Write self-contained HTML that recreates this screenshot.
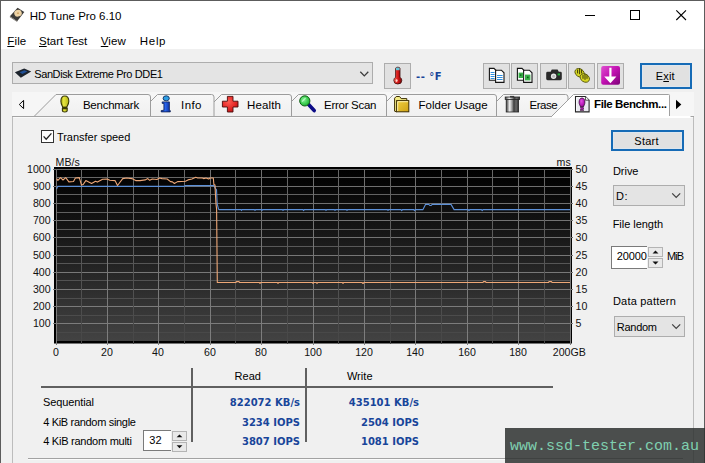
<!DOCTYPE html>
<html>
<head>
<meta charset="utf-8">
<title>HD Tune Pro 6.10</title>
<style>
html,body{margin:0;padding:0;}
body{width:705px;height:463px;overflow:hidden;background:#f0f0f0;position:relative;font-family:"Liberation Sans",sans-serif;font-size:12px;color:#000;}
.abs{position:absolute;}
.t{position:absolute;white-space:nowrap;line-height:14px;height:14px;font-size:11.5px;}
.d{font-size:11px;}
#win{position:absolute;left:0;top:0;width:703px;height:463px;border:1px solid #5c5c5c;border-bottom:none;background:#f0f0f0;}
#title{position:absolute;left:1px;top:1px;width:703px;height:48px;background:#fff;}
.btn{position:absolute;background:#e1e1e1;border:1px solid #adadad;box-sizing:border-box;}
.combo{position:absolute;background:#e4e4e4;border:1px solid #adadad;box-sizing:border-box;}
.val{position:absolute;white-space:nowrap;font-family:"DejaVu Sans","Liberation Sans",sans-serif;font-weight:bold;font-size:10px;color:#18459a;line-height:12px;text-align:right;}
.ax{font-family:"Liberation Sans",sans-serif;font-size:10.6px;fill:#111;}
.spin{position:absolute;background:#e9e9e9;border:1px solid #b4b4b4;box-sizing:border-box;}
</style>
</head>
<body>
<div id="win"></div>
<div id="title"></div>

<!-- title bar -->
<svg class="abs" style="left:9px;top:7px" width="17" height="16" viewBox="0 0 17 16">
  <polygon points="8.6,0.8 15.3,4.9 8.2,14.2 0.9,9.2" fill="#3b3a38"/>
  <polygon points="0.9,9.2 8.2,14.2 8.2,15 0.9,10.2" fill="#77736c"/>
  <ellipse cx="9" cy="6.2" rx="3.8" ry="3.3" fill="#ecd2a4" transform="rotate(-20 9 6.2)"/>
  <ellipse cx="9" cy="6.2" rx="1.1" ry="0.9" fill="#d2a868"/>
</svg>
<div class="t" style="left:29.8px;top:9.1px;letter-spacing:-0.03px">HD Tune Pro 6.10</div>
<svg class="abs" style="left:580px;top:5px" width="120" height="20" viewBox="0 0 120 20">
  <path d="M5 10.5H15" stroke="#000" stroke-width="1" fill="none"/>
  <rect x="50.5" y="5.5" width="9" height="9" stroke="#000" stroke-width="1" fill="none"/>
  <path d="M96.3 5.3L106 15M106 5.3L96.3 15" stroke="#000" stroke-width="1.1" fill="none"/>
</svg>

<!-- menu -->
<div class="t" style="left:7.3px;top:33.8px;letter-spacing:0.14px"><u>F</u>ile</div>
<div class="t" style="left:39.0px;top:33.8px;letter-spacing:-0.01px"><u>S</u>tart Test</div>
<div class="t" style="left:100.8px;top:33.8px;letter-spacing:0.06px"><u>V</u>iew</div>
<div class="t" style="left:139.8px;top:33.8px;letter-spacing:0.69px">Help</div>

<!-- toolbar row -->
<div class="combo" style="left:12px;top:62px;width:361px;height:22px"></div>
<svg class="abs" style="left:13px;top:66px" width="20" height="14" viewBox="13 66 20 14">
  <polygon points="14.9,72.3 24.2,68.6 31.2,71.4 20.8,77.8" fill="#1c232c"/>
  <polygon points="19.6,72.3 24.3,70.3 27.4,71.6 22.4,74" fill="#1f4f96"/>
</svg>
<div class="t d" style="left:34.2px;top:67.2px;letter-spacing:-0.38px">SanDisk Extreme Pro DDE1</div>
<svg class="abs" style="left:358px;top:68px" width="12" height="10" viewBox="0 0 12 10"><path d="M2.3 3.8L6.3 7.9L10.3 3.8" stroke="#3c3c3c" stroke-width="1.3" fill="none"/></svg>

<div class="btn" style="left:384px;top:63px;width:27px;height:26px"></div>
<svg class="abs" style="left:384px;top:63px" width="27" height="26" viewBox="384 63 27 26">
  <defs><linearGradient id="th" x1="0" y1="0" x2="1" y2="0"><stop offset="0" stop-color="#ff6a5a"/><stop offset="0.5" stop-color="#d81818"/><stop offset="1" stop-color="#7a0808"/></linearGradient></defs>
  <path d="M395.6 68.4Q395.6 67.2 397.8 67.2Q400 67.2 400 68.4V77.2Q401.8 78.4 401.8 80.4Q401.8 84 397.8 84Q393.8 84 393.8 80.4Q393.8 78.4 395.6 77.2Z" fill="url(#th)" stroke="#3a0a0a" stroke-width="0.8"/>
  <rect x="396" y="67.6" width="3.6" height="2.6" fill="#66c6d8"/>
  <ellipse cx="396.6" cy="80.6" rx="1" ry="1.3" fill="#ffd8d0"/>
</svg>
<div class="t" style="left:416.1px;top:70px;font-family:'DejaVu Sans','Liberation Sans',sans-serif;font-size:10px;font-weight:bold;color:#18459a;letter-spacing:0.45px">-- °F</div>

<div class="btn" style="left:483px;top:63px;width:27px;height:26px"></div>
<div class="btn" style="left:511px;top:63px;width:27px;height:26px"></div>
<div class="btn" style="left:540px;top:63px;width:27px;height:26px"></div>
<div class="btn" style="left:568px;top:63px;width:27px;height:26px"></div>
<div class="btn" style="left:597px;top:63px;width:27px;height:26px"></div>
<svg class="abs" style="left:483px;top:63px" width="142" height="26" viewBox="483 63 142 26">
  <defs>
    <linearGradient id="mg" x1="0" y1="0" x2="1" y2="1"><stop offset="0" stop-color="#e050d0"/><stop offset="0.5" stop-color="#c010b0"/><stop offset="1" stop-color="#7c0078"/></linearGradient>
  </defs>
  <!-- copy text -->
  <g stroke="#141414" stroke-width="1.1" fill="#fff">
    <path d="M489.4 68.4H494L496.4 70.8V80.2H489.4Z"/>
    <path d="M495.6 70.2H501.4L504 72.8V82.4H495.6Z"/>
  </g>
  <g stroke="#2f8fe0" stroke-width="1" fill="none">
    <path d="M490.6 72.5H494.6M490.6 74.5H494.6M490.6 76.5H494.6M490.6 78.5H494.6"/>
    <path d="M497 75.5H502.6M497 77.5H502.6M497 79.5H502.6"/>
  </g>
  <rect x="495.6" y="70.2" width="8.4" height="12.2" fill="none" stroke="none"/>
  <!-- copy image -->
  <g stroke="#141414" stroke-width="1.1" fill="#fff">
    <path d="M517.4 68.4H522L524.4 70.8V80.2H517.4Z"/>
    <path d="M523.6 70.2H529.4L532 72.8V82.4H523.6Z"/>
  </g>
  <rect x="518.6" y="72.6" width="4.6" height="5.4" fill="#38b048"/>
  <rect x="525" y="74.6" width="5.4" height="5.8" fill="#38b048"/>
  <rect x="527" y="76.6" width="1.6" height="1.6" fill="#0a5a18"/>
  <rect x="520" y="74.4" width="1.4" height="1.4" fill="#0a5a18"/>
  <!-- camera -->
  <path d="M546.2 73.2Q546.2 71.8 547.6 71.8H550.6L551.8 69.4H557.6L558.8 71.8H560.4Q561.8 71.8 561.8 73.2V78.8Q561.8 80.2 560.4 80.2H547.6Q546.2 80.2 546.2 78.8Z" fill="#2a2a2a"/>
  <circle cx="553.6" cy="76.2" r="2.7" fill="#e8e8e8"/>
  <circle cx="553.6" cy="76.2" r="1.5" fill="#bdbdbd"/>
  <rect x="557.6" y="73.4" width="2.4" height="2" fill="#28b040"/>
  <!-- coins -->
  <g fill="#d6d622" stroke="#5a5a10" stroke-width="0.9">
    <ellipse cx="579.6" cy="72.8" rx="5" ry="3.9" transform="rotate(35 579.6 72.8)"/>
    <ellipse cx="584.8" cy="78" rx="5" ry="3.9" transform="rotate(35 584.8 78)"/>
  </g>
  <g stroke="#3c3c06" stroke-width="1" fill="none">
    <path d="M577.6 69.6V73.4M579.6 68.2V74.2M581.6 69.6V73.4"/>
    <path d="M583 75V78.8M585 73.8V79.8M587 75.2V78.8"/>
  </g>
  <!-- save -->
  <rect x="601.2" y="66" width="18.8" height="18.8" rx="2" fill="url(#mg)"/>
  <path d="M609.3 67.8H611.5V76.6H616.4L610.4 83.2L604.2 76.6H609.3Z" fill="#fff"/>
</svg>
<div class="btn" style="left:640px;top:63px;width:52px;height:26px;border:2px solid #166bb6;box-shadow:inset 0 0 0 1px #dde6ee"></div>
<div class="t d" style="left:655.8px;top:69.2px;letter-spacing:0.15px">E<u>x</u>it</div>

<div class="abs" style="left:12px;top:92px;width:682px;height:25px;background:#f6f6f6"></div>
<div class="abs" style="left:12px;top:116px;width:682px;height:360px;border:1px solid #bcbcbc;background:#f0f0f0;box-sizing:border-box"></div>
<svg class="abs" style="left:0;top:90px" width="705" height="28" viewBox="0 90 705 28">
  <defs><linearGradient id="tg" x1="0" y1="0" x2="0" y2="1"><stop offset="0" stop-color="#f7f7f7"/><stop offset="1" stop-color="#f0f0f0"/></linearGradient></defs>
  <path d="M482.0 116.0L503.5 94.5H565.5Q568.0 94.5 568.0 97.0V116.0Z" fill="url(#tg)" stroke="none"/><path d="M482.0 116.0L503.5 94.5H565.5Q568.0 94.5 568.0 97.0V116.0" fill="none" stroke="#9c9c9c" stroke-width="1"/>
  <path d="M372.0 116.0L393.5 94.5H494.0Q496.5 94.5 496.5 97.0V116.0Z" fill="url(#tg)" stroke="none"/><path d="M372.0 116.0L393.5 94.5H494.0Q496.5 94.5 496.5 97.0V116.0" fill="none" stroke="#9c9c9c" stroke-width="1"/>
  <path d="M277.0 116.0L298.5 94.5H384.0Q386.5 94.5 386.5 97.0V116.0Z" fill="url(#tg)" stroke="none"/><path d="M277.0 116.0L298.5 94.5H384.0Q386.5 94.5 386.5 97.0V116.0" fill="none" stroke="#9c9c9c" stroke-width="1"/>
  <path d="M200.0 116.0L221.5 94.5H289.0Q291.5 94.5 291.5 97.0V116.0Z" fill="url(#tg)" stroke="none"/><path d="M200.0 116.0L221.5 94.5H289.0Q291.5 94.5 291.5 97.0V116.0" fill="none" stroke="#9c9c9c" stroke-width="1"/>
  <path d="M136.0 116.0L157.5 94.5H211.5Q214.0 94.5 214.0 97.0V116.0Z" fill="url(#tg)" stroke="none"/><path d="M136.0 116.0L157.5 94.5H211.5Q214.0 94.5 214.0 97.0V116.0" fill="none" stroke="#9c9c9c" stroke-width="1"/>
  <path d="M34.5 116.0L56.0 94.5H148.0Q150.5 94.5 150.5 97.0V116.0Z" fill="url(#tg)" stroke="none"/><path d="M34.5 116.0L56.0 94.5H148.0Q150.5 94.5 150.5 97.0V116.0" fill="none" stroke="#9c9c9c" stroke-width="1"/>
  <rect x="12" y="116" width="682" height="1" fill="#a4a4a4"/>
  <path d="M552.0 116.0L573.5 94.5H668.7Q669.5 94.5 669.5 95.3V116.0Z" fill="#ffffff" stroke="none"/><path d="M552.0 116.0L573.5 94.5H668.7Q669.5 94.5 669.5 95.3V116.0" fill="none" stroke="#a0a0a0" stroke-width="1"/>
  <rect x="13" y="117" width="680" height="2" fill="#f9f9f9"/>
  <rect x="552" y="116" width="138.5" height="3" fill="#ffffff"/>
  <path d="M23.6 100.4V108.6L19.3 104.5Z" fill="none" stroke="#000" stroke-width="1"/>
  <path d="M676 99.7V109.2L681.3 104.45Z" fill="#000"/>
  
  <defs>
    <linearGradient id="ylw" x1="0" y1="0" x2="1" y2="0"><stop offset="0" stop-color="#a8a810"/><stop offset="0.35" stop-color="#e6e640"/><stop offset="1" stop-color="#b4b414"/></linearGradient>
    <linearGradient id="blu" x1="0" y1="0" x2="1" y2="0"><stop offset="0" stop-color="#1038b0"/><stop offset="0.45" stop-color="#2a66ee"/><stop offset="1" stop-color="#0c2a90"/></linearGradient>
    <radialGradient id="red" cx="0.4" cy="0.35" r="0.8"><stop offset="0" stop-color="#ff5a50"/><stop offset="0.6" stop-color="#e02424"/><stop offset="1" stop-color="#a01010"/></radialGradient>
    <radialGradient id="grn" cx="0.4" cy="0.4" r="0.7"><stop offset="0" stop-color="#8af09a"/><stop offset="0.6" stop-color="#38cc4c"/><stop offset="1" stop-color="#1c9a30"/></radialGradient>
    <linearGradient id="fld" x1="0" y1="0" x2="1" y2="1"><stop offset="0" stop-color="#f0d040"/><stop offset="1" stop-color="#cfa216"/></linearGradient>
    <linearGradient id="trs" x1="0" y1="0" x2="1" y2="0"><stop offset="0" stop-color="#3a3a3a"/><stop offset="0.28" stop-color="#f0f0f0"/><stop offset="0.5" stop-color="#8a8a8a"/><stop offset="0.62" stop-color="#3c3c3c"/><stop offset="0.8" stop-color="#6a6a6a"/><stop offset="1" stop-color="#2a2a2a"/></linearGradient>
    <radialGradient id="pur" cx="0.4" cy="0.35" r="0.8"><stop offset="0" stop-color="#e050e0"/><stop offset="0.55" stop-color="#b818b8"/><stop offset="1" stop-color="#600c60"/></radialGradient>
  </defs>
  <!-- bulb -->
  <path d="M64.8 96C67.4 96 68.8 98.4 68.8 101.2C68.8 104 67.4 105.6 66.6 107.4H62.9C62.2 105.6 60.9 104 60.9 101.2C60.9 98.4 62.2 96 64.8 96Z" fill="url(#ylw)" stroke="#3a3a06" stroke-width="1.1"/>
  <rect x="62.2" y="106.8" width="5.2" height="1.8" fill="#3a3a06"/>
  <path d="M62.4 108.6H67.2V110.6Q67.2 112 64.8 112Q62.4 112 62.4 110.6Z" fill="url(#ylw)" stroke="#3a3a06" stroke-width="1.1"/>
  <!-- info -->
  <ellipse cx="166.2" cy="98.3" rx="3.1" ry="2.5" fill="#2e9fe4" stroke="#0e2c5c" stroke-width="0.9"/>
  <path d="M162.2 101.9H169.4V110.2L170.3 110.6V111.9H161.2V110.6L163.9 110.2V103.4H162.2Z" fill="url(#blu)" stroke="#0e2050" stroke-width="0.8"/>
  <!-- health -->
  <path d="M227.4 96.4H233V101.2H238V107H233V112H227.4V107H222.4V101.2H227.4Z" fill="url(#red)" stroke="#4a0c0c" stroke-width="0.9" stroke-linejoin="round"/>
  <!-- magnifier -->
  <path d="M308.6 104.6L314.2 110.6" stroke="#0c0c86" stroke-width="3.6" stroke-linecap="round"/>
  <circle cx="304.8" cy="100.9" r="5.1" fill="url(#grn)" stroke="#0e5a12" stroke-width="1"/>
  <path d="M302 101.6L305.6 98" stroke="#c8ffd0" stroke-width="1.2" opacity="0.8"/>
  <!-- folder -->
  <path d="M394.6 111.2V98.2L396.2 96.5H399.6L401.2 98.6H406.8V101H396.4V111.6Z" fill="#f2ea86"/>
  <path d="M394.6 111.2V98.2L396.2 96.5H399.6L401.2 98.6H406.8V100.4" fill="none" stroke="#3c2e04" stroke-width="1"/>
  <path d="M394.6 111.2L396.6 111.8" fill="none" stroke="#3c2e04" stroke-width="1"/>
  <rect x="396.6" y="100.6" width="12.2" height="11.2" fill="url(#fld)" stroke="#3c2e04" stroke-width="1"/>
  <path d="M397.7 111V101.7H408" stroke="#fff6c0" stroke-width="0.9" fill="none"/>
  <!-- trash -->
  <rect x="506.2" y="99" width="12.4" height="13" fill="url(#trs)" stroke="#262626" stroke-width="0.8"/>
  <rect x="505.2" y="97" width="14.4" height="2.4" fill="url(#trs)" stroke="#262626" stroke-width="0.8"/>
  <rect x="510" y="95.9" width="4.2" height="1.4" fill="#3a3a3a"/>
  <!-- file bench -->
  <path d="M575.5 96.5H585.4L589.1 100.2V111.9H575.5Z" fill="#e9e9f0" stroke="#262626" stroke-width="1.1"/>
  <path d="M585.4 96.5V100.2H589.1" fill="#fff" stroke="#262626" stroke-width="0.8"/>
  <path d="M576.6 111V97.6H585" fill="none" stroke="#fff" stroke-width="0.8"/>
  <path d="M582 98C583.9 98 584.9 100 584.9 102.2C584.9 104.2 584 105.4 583.4 106.9H580.6C580 105.4 579.1 104.2 579.1 102.2C579.1 100 580.1 98 582 98Z" fill="url(#pur)" stroke="#3c083c" stroke-width="0.8"/>
  <rect x="580.4" y="107.7" width="3.2" height="1.9" fill="#a818a8" stroke="#3c083c" stroke-width="0.6"/>
  <path d="M580 110.5H584" stroke="#5a2a5a" stroke-width="0.8"/>

</svg>
<div class="t" style="left:82.9px;top:98.3px;letter-spacing:-0.24px">Benchmark</div>
<div class="t" style="left:181.0px;top:98.3px;letter-spacing:0.43px">Info</div>
<div class="t" style="left:247.1px;top:98.3px;letter-spacing:0.12px">Health</div>
<div class="t" style="left:324.1px;top:98.3px;letter-spacing:-0.29px">Error Scan</div>
<div class="t" style="left:418.6px;top:98.3px;letter-spacing:-0.00px">Folder Usage</div>
<div class="t" style="left:529.6px;top:98.3px;letter-spacing:-0.49px">Erase</div>
<div class="t" style="left:594.0px;top:97.3px;letter-spacing:-0.39px;font-weight:bold">File Benchm...</div>

<!-- content -->
<div class="abs" style="left:41px;top:130px;width:13px;height:13px;box-sizing:border-box;border:1px solid #333;background:#fff"></div>
<svg class="abs" style="left:41px;top:130px" width="13" height="13" viewBox="0 0 13 13"><path d="M2.6 6.4L5.2 9.2L10.4 3.4" stroke="#222" stroke-width="1.3" fill="none"/></svg>
<div class="t d" style="left:56.9px;top:130.2px;letter-spacing:-0.01px">Transfer speed</div>

<div class="btn" style="left:611px;top:130px;width:73px;height:21px;border:2px solid #166bb6;box-shadow:inset 0 0 0 1px #dde6ee"></div>
<div class="t d" style="left:634.3px;top:133.7px;letter-spacing:0.27px">Start</div>
<div class="t d" style="left:612.9px;top:164.3px;letter-spacing:-0.02px">Drive</div>
<div class="combo" style="left:613px;top:185px;width:72px;height:21px"></div>
<div class="t d" style="left:616.1px;top:189.2px;letter-spacing:0.5px">D:</div>
<svg class="abs" style="left:669.7px;top:190.4px" width="12" height="10" viewBox="0 0 12 10"><path d="M2.2 3.3L6.2 7.4L10.2 3.3" stroke="#404040" stroke-width="1.2" fill="none"/></svg>
<div class="t d" style="left:612.7px;top:217px;letter-spacing:-0.04px">File length</div>
<div class="abs" style="left:611px;top:246px;width:36px;height:23px;box-sizing:border-box;border:1px solid #7a7a7a;border-right:none;background:#fff"></div>
<div class="t d" style="left:616.8px;top:249px;letter-spacing:-0.14px">20000</div>
<div class="spin" style="left:648px;top:247px;width:15px;height:10px"></div>
<div class="spin" style="left:648px;top:258px;width:15px;height:10px"></div>
<svg class="abs" style="left:648px;top:247px" width="15" height="21" viewBox="0 0 15 21"><path d="M4.5 6.5L7.5 3.5L10.5 6.5Z M4.5 14.5L7.5 17.5L10.5 14.5Z" fill="#111"/></svg>
<div class="t d" style="left:666.9px;top:249.2px;letter-spacing:-0.82px">MiB</div>
<div class="t d" style="left:612.9px;top:294.1px;letter-spacing:0.22px">Data pattern</div>
<div class="combo" style="left:614px;top:316px;width:71px;height:21px"></div>
<div class="t d" style="left:616.8px;top:319.8px;letter-spacing:-0.28px">Random</div>
<svg class="abs" style="left:669.7px;top:321.4px" width="12" height="10" viewBox="0 0 12 10"><path d="M2.2 3.3L6.2 7.4L10.2 3.3" stroke="#404040" stroke-width="1.2" fill="none"/></svg>

<svg class="abs" style="left:0;top:150px" width="600" height="215" viewBox="0 150 600 215">
  <defs>
    <linearGradient id="cg" x1="0" y1="0" x2="0" y2="1">
      <stop offset="0" stop-color="#000"/>
      <stop offset="0.5" stop-color="#1f1f1f"/>
      <stop offset="1" stop-color="#434343"/>
    </linearGradient>
    <linearGradient id="gmaj" x1="0" y1="169" x2="0" y2="342" gradientUnits="userSpaceOnUse">
      <stop offset="0" stop-color="#6e6e6e"/><stop offset="1" stop-color="#7e7e7e"/>
    </linearGradient>
    <linearGradient id="gmin" x1="0" y1="169" x2="0" y2="342" gradientUnits="userSpaceOnUse">
      <stop offset="0" stop-color="#686868"/><stop offset="1" stop-color="#474747"/>
    </linearGradient>
  </defs>
  <rect x="54" y="167" width="518" height="176.3" fill="#000"/>
  <rect x="56" y="169" width="514.5" height="172.4" fill="url(#cg)"/>
  <rect x="54" y="341" width="518" height="2.3" fill="#000"/>
  <g shape-rendering="crispEdges" fill="none" stroke-width="1">
  <path d="M53 169.5H573" stroke="#6e6e6e"/>
  <path d="M56 177.5H570.5" stroke="#666666"/>
  <path d="M53 186.5H573" stroke="#707070"/>
  <path d="M56 194.5H570.5" stroke="#636363"/>
  <path d="M53 203.5H573" stroke="#717171"/>
  <path d="M56 212.5H570.5" stroke="#606060"/>
  <path d="M53 220.5H573" stroke="#737373"/>
  <path d="M56 229.5H570.5" stroke="#5c5c5c"/>
  <path d="M53 237.5H573" stroke="#747474"/>
  <path d="M56 246.5H570.5" stroke="#595959"/>
  <path d="M53 255.5H573" stroke="#767676"/>
  <path d="M56 263.5H570.5" stroke="#565656"/>
  <path d="M53 272.5H573" stroke="#787878"/>
  <path d="M56 280.5H570.5" stroke="#535353"/>
  <path d="M53 289.5H573" stroke="#797979"/>
  <path d="M56 298.5H570.5" stroke="#4f4f4f"/>
  <path d="M53 306.5H573" stroke="#7b7b7b"/>
  <path d="M56 315.5H570.5" stroke="#4c4c4c"/>
  <path d="M53 323.5H573" stroke="#7c7c7c"/>
  <path d="M56 332.5H570.5" stroke="#494949"/>
  <rect x="56.0" y="169" width="1" height="176" fill="url(#gmaj)"/>
  <rect x="81.0" y="169" width="1" height="175" fill="url(#gmin)"/>
  <rect x="107.0" y="169" width="1" height="176" fill="url(#gmaj)"/>
  <rect x="133.0" y="169" width="1" height="175" fill="url(#gmin)"/>
  <rect x="158.0" y="169" width="1" height="176" fill="url(#gmaj)"/>
  <rect x="184.0" y="169" width="1" height="175" fill="url(#gmin)"/>
  <rect x="210.0" y="169" width="1" height="176" fill="url(#gmaj)"/>
  <rect x="235.0" y="169" width="1" height="175" fill="url(#gmin)"/>
  <rect x="261.0" y="169" width="1" height="176" fill="url(#gmaj)"/>
  <rect x="287.0" y="169" width="1" height="175" fill="url(#gmin)"/>
  <rect x="313.0" y="169" width="1" height="176" fill="url(#gmaj)"/>
  <rect x="338.0" y="169" width="1" height="175" fill="url(#gmin)"/>
  <rect x="364.0" y="169" width="1" height="176" fill="url(#gmaj)"/>
  <rect x="390.0" y="169" width="1" height="175" fill="url(#gmin)"/>
  <rect x="415.0" y="169" width="1" height="176" fill="url(#gmaj)"/>
  <rect x="441.0" y="169" width="1" height="175" fill="url(#gmin)"/>
  <rect x="467.0" y="169" width="1" height="176" fill="url(#gmaj)"/>
  <rect x="492.0" y="169" width="1" height="175" fill="url(#gmin)"/>
  <rect x="518.0" y="169" width="1" height="176" fill="url(#gmaj)"/>
  <rect x="544.0" y="169" width="1" height="175" fill="url(#gmin)"/>
  <rect x="570.0" y="169" width="1" height="176" fill="url(#gmaj)"/>
  </g>
  <polyline points="56.6,189.0 57.6,186.4 184.0,186.4 185.0,185.6 213.9,185.6 215.2,188.3 216.5,189.6 217.2,203.9 218.5,209.1 219.1,209.6 241.0,209.6 241.5,210.6 242.0,209.6 254.5,209.6 255.0,210.6 255.5,209.6 261.5,209.6 262.0,210.6 262.5,209.6 282.5,209.6 283.0,210.6 283.5,209.6 303.0,209.6 303.6,210.6 304.2,209.6 325.5,209.6 326.0,210.6 326.5,209.6 334.5,209.6 335.0,210.6 335.5,209.6 346.5,209.6 347.0,210.6 347.5,209.6 387.5,209.6 388.0,210.6 388.5,209.6 401.0,209.6 401.7,210.7 402.4,209.6 413.8,209.6 414.5,210.7 415.2,209.6 423.0,209.6 425.5,204.4 428.8,204.4 429.8,205.5 431.0,205.5 432.3,204.4 451.0,204.4 454.1,209.6 468.3,209.6 469.0,210.7 469.7,209.6 481.5,209.6 482.2,210.7 482.9,209.6 570.0,209.6" fill="none" stroke="#5c90d8" stroke-width="1.1" stroke-linejoin="round"/>
  <polyline points="56.6,178.6 57.9,180.3 60.5,177.6 63.0,180.0 65.7,177.6 68.9,181.9 73.5,181.5 75.4,178.0 79.3,177.6 81.5,185.1 83.2,184.5 85.8,180.6 91.6,183.4 95.5,181.2 97.4,182.1 102.6,179.3 107.2,179.0 109.8,180.3 115.0,180.6 117.5,185.5 122.7,178.6 126.6,178.0 131.8,178.6 135.7,180.6 140.0,180.6 145.2,179.9 147.8,178.6 149.7,180.3 152.3,179.0 156.9,179.5 159.5,178.0 162.0,178.6 167.2,179.0 170.5,181.6 172.4,181.9 174.4,183.5 177.6,181.6 185.4,181.2 188.0,179.9 191.9,179.0 195.8,177.3 197.7,178.0 202.3,178.0 203.6,178.6 206.1,178.0 208.7,179.0 210.0,178.0 213.3,178.0 213.9,184.5 215.0,185.1 215.4,193.5 216.0,203.9 216.6,209.1 217.3,282.5 236.0,282.5 236.5,281.6 239.0,281.6 239.5,282.5 259.5,282.5 260.0,283.5 260.5,282.5 277.5,282.5 278.0,283.5 278.5,282.5 312.5,282.5 313.0,283.5 313.5,282.5 316.5,282.5 317.0,283.5 317.5,282.5 342.5,282.5 343.0,283.5 343.5,282.5 362.0,282.5 363.0,283.5 364.0,282.5 483.0,282.5 483.5,281.6 485.5,281.6 486.0,282.5 548.5,282.5 549.0,281.6 551.5,281.6 552.0,282.5 570.0,282.5" fill="none" stroke="#eda777" stroke-width="1.1" stroke-linejoin="round"/>
  <g class="ax">
  <text x="50.6" y="172.7" text-anchor="end">1000</text>
  <text x="50.6" y="189.7" text-anchor="end">900</text>
  <text x="50.6" y="206.7" text-anchor="end">800</text>
  <text x="50.6" y="223.7" text-anchor="end">700</text>
  <text x="50.6" y="240.7" text-anchor="end">600</text>
  <text x="50.6" y="258.7" text-anchor="end">500</text>
  <text x="50.6" y="275.7" text-anchor="end">400</text>
  <text x="50.6" y="292.7" text-anchor="end">300</text>
  <text x="50.6" y="309.7" text-anchor="end">200</text>
  <text x="50.6" y="326.7" text-anchor="end">100</text>
  <text x="575.6" y="172.7">50</text>
  <text x="575.6" y="189.7">45</text>
  <text x="575.6" y="206.7">40</text>
  <text x="575.6" y="223.7">35</text>
  <text x="575.6" y="240.7">30</text>
  <text x="575.6" y="258.7">25</text>
  <text x="575.6" y="275.7">20</text>
  <text x="575.6" y="292.7">15</text>
  <text x="575.6" y="309.7">10</text>
  <text x="575.6" y="326.7">5</text>
  <text x="56.0" y="356" text-anchor="middle">0</text>
  <text x="107.0" y="356" text-anchor="middle">20</text>
  <text x="158.0" y="356" text-anchor="middle">40</text>
  <text x="210.0" y="356" text-anchor="middle">60</text>
  <text x="261.0" y="356" text-anchor="middle">80</text>
  <text x="313.0" y="356" text-anchor="middle">100</text>
  <text x="364.0" y="356" text-anchor="middle">120</text>
  <text x="415.0" y="356" text-anchor="middle">140</text>
  <text x="467.0" y="356" text-anchor="middle">160</text>
  <text x="518.0" y="356" text-anchor="middle">180</text>
  <text x="552.8" y="356">200GB</text>
  <text x="55.6" y="165.6">MB/s</text>
  <text x="556.6" y="165.6">ms</text>
  </g>
</svg>

<!-- table -->
<div class="abs" style="left:41px;top:386px;width:512px;height:2px;background:#606060"></div>
<div class="abs" style="left:191px;top:368px;width:2px;height:74px;background:#606060"></div>
<div class="abs" style="left:305px;top:368px;width:2px;height:74px;background:#606060"></div>
<div class="t d" style="left:234.5px;top:368.7px;letter-spacing:0.06px">Read</div>
<div class="t d" style="left:346.9px;top:368.7px;letter-spacing:0.05px">Write</div>
<div class="t d" style="left:42.9px;top:395.2px;letter-spacing:-0.09px">Sequential</div>
<div class="t d" style="left:43.2px;top:415.2px;letter-spacing:-0.32px">4 KiB random single</div>
<div class="t d" style="left:43.2px;top:434px;letter-spacing:-0.25px">4 KiB random multi</div>
<div class="abs" style="left:143px;top:430px;width:28px;height:21px;box-sizing:border-box;border:1px solid #7a7a7a;border-right:none;background:#fff"></div>
<div class="t d" style="left:149.2px;top:433.2px;letter-spacing:0.1px">32</div>
<div class="spin" style="left:172px;top:431px;width:15px;height:9.5px"></div>
<div class="spin" style="left:172px;top:442px;width:15px;height:9.5px"></div>
<svg class="abs" style="left:172px;top:431px" width="15" height="20" viewBox="0 0 15 20"><path d="M4.6 6.3L7.5 3.4L10.4 6.3Z M4.6 14.3L7.5 17.2L10.4 14.3Z" fill="#111"/></svg>
<div class="val" style="left:200px;width:100px;top:396.5px">822072 KB/s</div>
<div class="val" style="left:200px;width:100px;top:416.5px">3234 IOPS</div>
<div class="val" style="left:200px;width:100px;top:435.6px">3807 IOPS</div>
<div class="val" style="left:319px;width:100px;top:396.5px">435101 KB/s</div>
<div class="val" style="left:319px;width:100px;top:416.5px">2504 IOPS</div>
<div class="val" style="left:319px;width:100px;top:435.6px">1081 IOPS</div>

<div class="abs" style="left:28px;top:458px;width:655px;height:1px;background:#a2a2a2"></div>
<div class="abs" style="left:28px;top:459px;width:655px;height:1px;background:#fbfbfb"></div>

<!-- watermark -->
<div class="abs" style="left:505px;top:428px;width:200px;height:35px;background:rgba(46,49,48,0.85)"></div>
<div class="t" style="left:510px;top:438.4px;font-family:'Liberation Mono',monospace;font-size:15px;line-height:18px;height:18px;color:#7fd0b0">www.ssd-tester.com.au</div>
</body>
</html>
